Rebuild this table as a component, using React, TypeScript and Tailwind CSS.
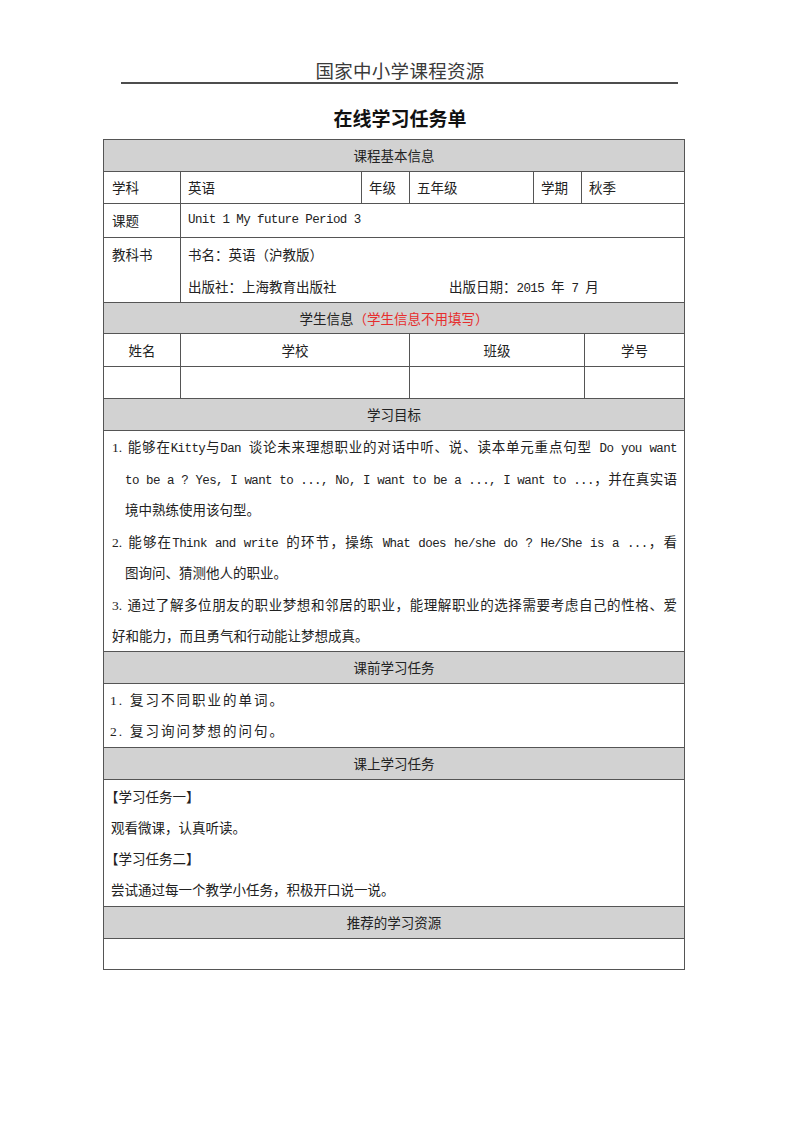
function L({ children }: { children: React.ReactNode }) {
  return (
    <span className="leading-none font-['Liberation_Mono','Noto_Sans_CJK_SC',monospace] text-[12.5px] tracking-[-0.6px]">
      {children}
    </span>
  );
}

function N({ children }: { children: React.ReactNode }) {
  return (
    <span className="inline-block leading-none w-[15px] font-['Liberation_Serif',serif] text-[13.5px]">
      {children}
    </span>
  );
}

function Gray({ className, children }: { className: string; children: React.ReactNode }) {
  return (
    <div className={"flex items-center justify-center bg-[#d2d2d2] border-[#555] " + className}>
      {children}
    </div>
  );
}

export default function App() {
  return (
    <div className="w-[800px] h-[1132px] bg-white text-[#222] font-['Noto_Sans_CJK_SC',sans-serif]">
      <div className="pt-[58px] text-center text-[18.5px] leading-[24px] text-[#3a3a3a] tracking-[0.3px]">
        国家中小学课程资源
      </div>
      <div className="ml-[121px] w-[557px] h-[2px] bg-[#4d4d4d]"></div>
      <div className="mt-[22px] text-center text-[19px] leading-[24px] font-bold text-[#111]">
        在线学习任务单
      </div>

      <div className="mt-[9px] ml-[103px] w-[582px] border border-[#555] text-[13.5px]">
        <Gray className="h-[31px]">课程基本信息</Gray>

        <div className="flex h-[32px] border-t border-[#555]">
          <div className="w-[76px] flex items-center pl-[8px]">学科</div>
          <div className="w-[181px] flex items-center pl-[7px] border-l border-[#555]">英语</div>
          <div className="w-[48px] flex items-center pl-[7px] border-l border-[#555]">年级</div>
          <div className="w-[124px] flex items-center pl-[7px] border-l border-[#555]">五年级</div>
          <div className="w-[48px] flex items-center pl-[7px] border-l border-[#555]">学期</div>
          <div className="flex-1 flex items-center pl-[7px] border-l border-[#555]">秋季</div>
        </div>

        <div className="flex h-[34px] border-t border-[#555]">
          <div className="w-[76px] flex items-center pl-[8px]">课题</div>
          <div className="flex-1 flex items-center pl-[7px] border-l border-[#555]">
            <L>Unit 1 My future Period 3</L>
          </div>
        </div>

        <div className="flex h-[65px] border-t border-[#555] leading-[32px]">
          <div className="w-[76px] pl-[8px]">教科书</div>
          <div className="flex-1 pl-[7px] border-l border-[#555]">
            <div className="h-[32px]">书名：英语（沪教版）</div>
            <div className="flex h-[32px]">
              <span className="w-[261px]">出版社：上海教育出版社</span>
              <span>
                出版日期：<L>2015 </L>年<L> 7 </L>月
              </span>
            </div>
          </div>
        </div>

        <Gray className="h-[31px] border-t">
          学生信息<span className="text-[#e62e2e]">（学生信息不用填写）</span>
        </Gray>

        <div className="flex h-[33px] border-t border-[#555]">
          <div className="w-[76px] flex items-center justify-center">姓名</div>
          <div className="w-[229px] flex items-center justify-center border-l border-[#555]">学校</div>
          <div className="w-[175px] flex items-center justify-center border-l border-[#555]">班级</div>
          <div className="flex-1 flex items-center justify-center border-l border-[#555]">学号</div>
        </div>
        <div className="flex h-[32px] border-t border-[#555]">
          <div className="w-[76px]"></div>
          <div className="w-[229px] border-l border-[#555]"></div>
          <div className="w-[175px] border-l border-[#555]"></div>
          <div className="flex-1 border-l border-[#555]"></div>
        </div>

        <Gray className="h-[32px] border-t">学习目标</Gray>

        <div className="h-[221px] border-t border-[#555] pl-[8px] pr-[7px] leading-[31.5px]">
          <div className="h-[31.5px] text-justify [text-align-last:justify]">
            <N>1.</N>能够在<L>Kitty</L>与<L>Dan </L>谈论未来理想职业的对话中听、说、读本单元重点句型<L> Do you want</L>
          </div>
          <div className="h-[31.5px] pl-[13px] text-justify [text-align-last:justify]">
            <L>to be a ? Yes, I want to ..., No, I want to be a ..., I want to ...</L>，并在真实语
          </div>
          <div className="h-[31.5px] pl-[13px]">境中熟练使用该句型。</div>
          <div className="h-[31.5px] text-justify [text-align-last:justify]">
            <N>2.</N>能够在<L>Think and write </L>的环节，操练<L> What does he/she do ? He/She is a ...</L>，看
          </div>
          <div className="h-[31.5px] pl-[13px]">图询问、猜测他人的职业。</div>
          <div className="h-[31.5px] text-justify [text-align-last:justify]">
            <N>3.</N>通过了解多位朋友的职业梦想和邻居的职业，能理解职业的选择需要考虑自己的性格、爱
          </div>
          <div className="h-[31.5px]">好和能力，而且勇气和行动能让梦想成真。</div>
        </div>

        <Gray className="h-[32px] border-t">课前学习任务</Gray>

        <div className="h-[64px] border-t border-[#555] pl-[6px] leading-[31px] tracking-[2px]">
          <div className="h-[31px]">
            <N>1.</N> 复习不同职业的单词。
          </div>
          <div className="h-[31px]">
            <N>2.</N> 复习询问梦想的问句。
          </div>
        </div>

        <Gray className="h-[32px] border-t">课上学习任务</Gray>

        <div className="h-[127px] border-t border-[#555] pl-[7px] pt-[1px] leading-[31px]">
          <div className="-ml-[6px]">【学习任务一】</div>
          <div>观看微课，认真听读。</div>
          <div className="-ml-[6px]">【学习任务二】</div>
          <div>尝试通过每一个教学小任务，积极开口说一说。</div>
        </div>

        <Gray className="h-[32px] border-t">推荐的学习资源</Gray>
        <div className="h-[31px] border-t border-[#555]"></div>
      </div>
    </div>
  );
}
